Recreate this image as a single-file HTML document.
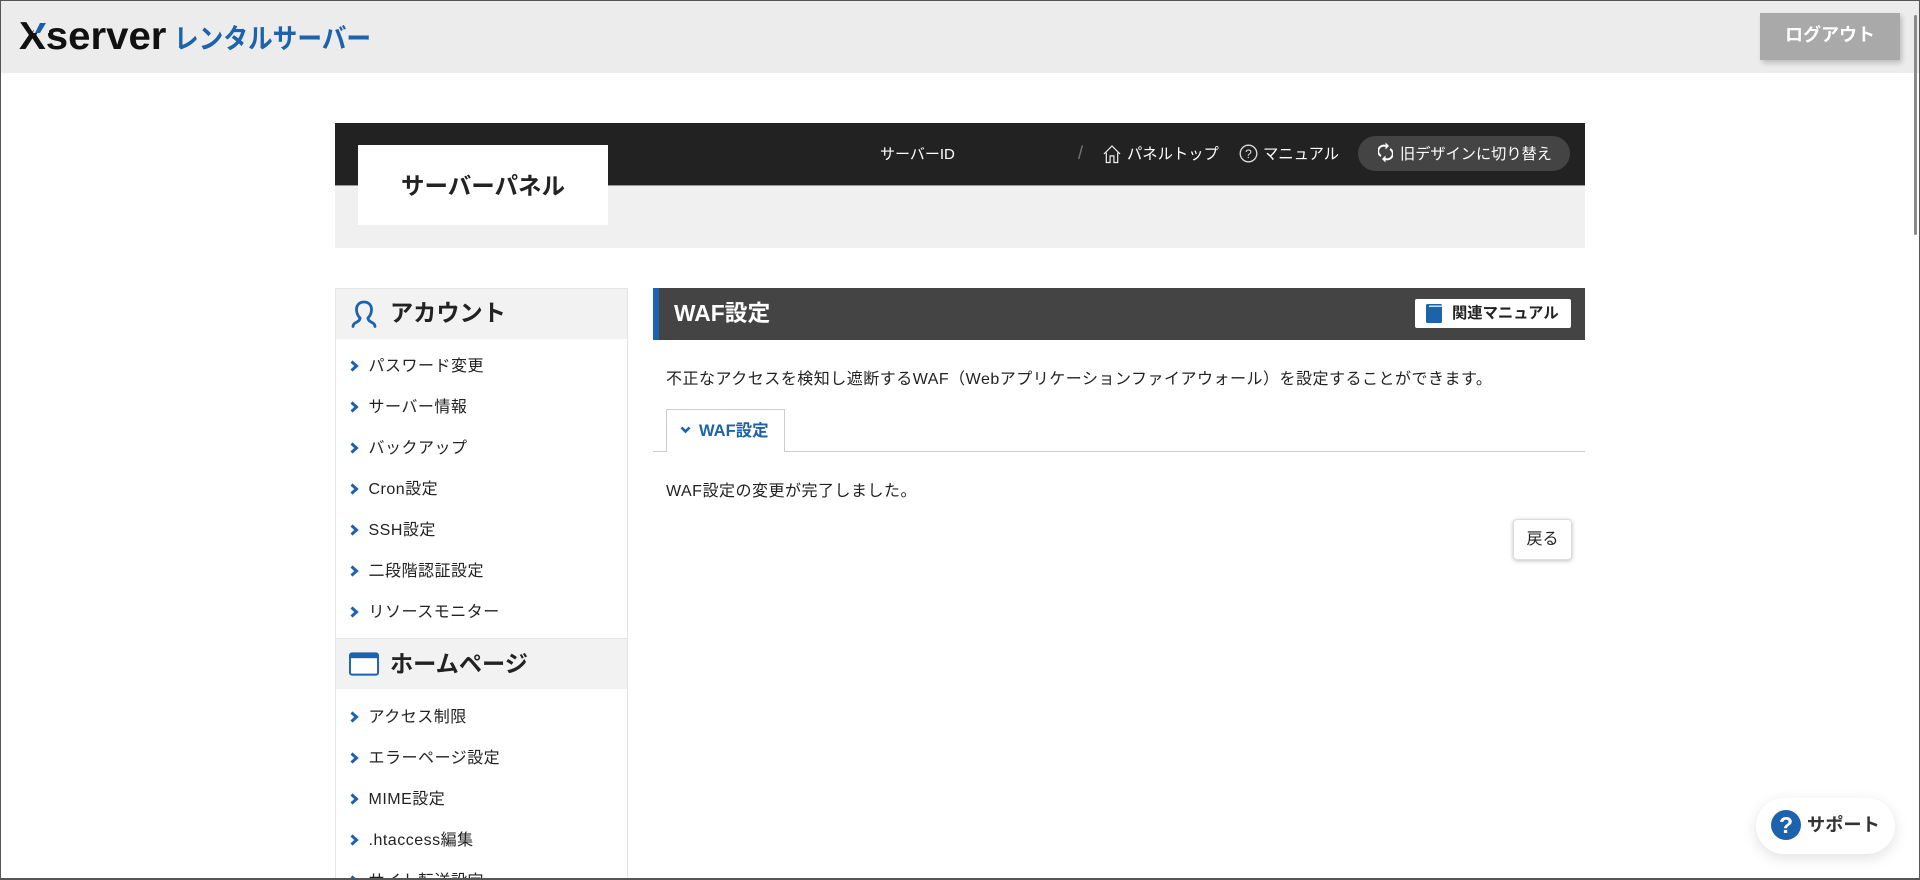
<!DOCTYPE html>
<html lang="ja">
<head>
<meta charset="utf-8">
<title>WAF設定</title>
<style>
*{box-sizing:border-box;margin:0;padding:0}
html,body{width:1920px;height:880px;overflow:hidden;background:#fff}
body{position:relative;font-family:"Liberation Sans","Noto Sans CJK JP",sans-serif;color:#222;font-size:16px;text-spacing-trim:space-all}
.a{position:absolute;white-space:nowrap}
.t{line-height:24px;height:24px}
.item{position:absolute;left:368.5px;line-height:24px;height:24px;font-size:16px;letter-spacing:.5px;color:#222;white-space:nowrap}
.arr{position:absolute;left:350px;width:9px;height:12px}
</style>
</head>
<body>
<div class="a" style="left:0;top:0;width:1920px;height:73px;background:#ececec"></div>

<!-- logo -->
<div class="a" style="left:19px;top:13px;font-size:39px;line-height:48px;font-weight:700;color:#111;transform-origin:0 0;transform:scale(1.03,1)">Xserver</div>
<svg class="a" style="left:32px;top:20px" width="17" height="14"><polygon points="4,0 17,0 17,13 1,13" fill="#ececec"/><polygon points="8,3 14,3 8,13 3,13" fill="#1a5fa8"/></svg>
<div class="a" style="left:174px;top:21px;font-size:27.5px;line-height:36px;font-weight:700;color:#1d62ad;transform-origin:0 0;transform:scale(.897,1)">レンタルサーバー</div>

<!-- logout -->
<div class="a" style="left:1760px;top:13px;width:140px;height:47px;background:#a9a9a9;box-shadow:2px 3px 5px rgba(0,0,0,.2);color:#fff;font-weight:700;font-size:18px;line-height:44px;text-align:center">ログアウト</div>

<!-- scrollbar -->
<div class="a" style="left:1914px;top:15px;width:3px;height:220px;background:#8a8a8a;border-radius:2px"></div>

<!-- panel header -->
<div class="a" style="left:335px;top:123px;width:1250px;height:62px;background:#222"></div>
<div class="a" style="left:335px;top:185px;width:1250px;height:63px;background:#f0f0f0;border-top:1px solid #999"></div>
<div class="a" style="left:358px;top:145px;width:250px;height:80px;background:#fff;color:#222;font-weight:700;font-size:23.5px;line-height:83px;text-align:center">サーバーパネル</div>

<div class="a t" style="left:880px;top:143px;color:#fff;font-size:15px">サーバーID</div>
<div class="a t" style="left:1078px;top:141px;color:#777;font-size:18px">/</div>
<svg class="a" style="left:1103px;top:144px" width="18" height="20" viewBox="0 0 19 20" fill="none" stroke="#eee" stroke-width="1.3"><path d="M1 10 9.5 1.5 18 10M3.5 8.5V19H7.5V12H11.500V19H15.500V8.500"/></svg>
<div class="a t" style="left:1127px;top:143px;color:#fff;font-size:15.3px">パネルトップ</div>
<svg class="a" style="left:1239px;top:144px" width="19" height="19" viewBox="0 0 19 19" fill="none"><circle cx="9.5" cy="9.5" r="8.3" stroke="#ddd" stroke-width="1.3"/><text x="9.5" y="14" text-anchor="middle" fill="#ddd" font-size="12" font-family="Liberation Sans,sans-serif">?</text></svg>
<div class="a t" style="left:1263px;top:143px;color:#fff;font-size:15.3px">マニュアル</div>
<div class="a" style="left:1358px;top:136px;width:212px;height:35px;background:#444;border-radius:18px"></div>
<svg class="a" style="left:1378px;top:142px" width="15" height="21" viewBox="0 0 15 21" fill="none" stroke="#fff" stroke-width="2"><path d="M3 14A5.500 5.500 0 0 1 7.500 4"/><path d="M12 7A5.500 5.500 0 0 1 7.500 17"/><path d="M7.500 0.500 11 4 7.500 7.500Z" fill="#fff" stroke="none"/><path d="M7.500 13.500 4 17 7.500 20.500Z" fill="#fff" stroke="none"/></svg>
<div class="a t" style="left:1400px;top:143px;color:#fff;font-size:15.2px">旧デザインに切り替え</div>

<!-- sidebar -->
<div class="a" style="left:335px;top:288px;width:293px;height:600px;border:1px solid #e4e4e4;border-bottom:0"></div>
<div class="a" style="left:336px;top:289px;width:291px;height:50px;background:#f2f2f2"></div>
<svg class="a" style="left:351px;top:300px" width="26" height="28" viewBox="0 0 26 28" fill="none" stroke="#1d62ad" stroke-width="2.8" stroke-linecap="round"><path d="M9 18C6 15 5.500 12 5.500 9.500 5.500 4.500 9 2 13 2S20.500 4.500 20.500 9.500C20.500 12 20 15 17 18"/><path d="M9 18C9 21 6 22 4 23 2.500 24 2 25 2 26.500"/><path d="M17 18C17 21 20 22 22 23 23.500 24 24 25 24 26.500"/></svg>
<div class="a" style="left:390px;top:295px;font-size:23.2px;line-height:36px;font-weight:700;color:#222">アカウント</div>

<div class="a" style="left:336px;top:638px;width:291px;height:51px;background:#f2f2f2;border-top:1px solid #e4e4e4"></div>
<svg class="a" style="left:349px;top:652px" width="30" height="24" viewBox="0 0 31 24"><rect x="1" y="1" width="29" height="22" rx="2" fill="#fff" stroke="#1d62ad" stroke-width="2"/><rect x="1" y="1" width="29" height="5" fill="#1d62ad"/></svg>
<div class="a" style="left:390px;top:646px;font-size:23.2px;line-height:36px;font-weight:700;color:#222">ホームページ</div>

<svg width="0" height="0" style="position:absolute"><defs><symbol id="c" viewBox="0 0 9 12"><path d="M1.500 1.500 6.500 6 1.500 10.500" fill="none" stroke="#1d62ad" stroke-width="3"/></symbol></defs></svg>

<svg class="arr" style="top:360px"><use href="#c"/></svg><div class="item" style="top:355px">パスワード変更</div>
<svg class="arr" style="top:401px"><use href="#c"/></svg><div class="item" style="top:396px">サーバー情報</div>
<svg class="arr" style="top:442px"><use href="#c"/></svg><div class="item" style="top:437px">バックアップ</div>
<svg class="arr" style="top:483px"><use href="#c"/></svg><div class="item" style="top:478px">Cron設定</div>
<svg class="arr" style="top:524px"><use href="#c"/></svg><div class="item" style="top:519px">SSH設定</div>
<svg class="arr" style="top:565px"><use href="#c"/></svg><div class="item" style="top:560px">二段階認証設定</div>
<svg class="arr" style="top:606px"><use href="#c"/></svg><div class="item" style="top:601px">リソースモニター</div>
<svg class="arr" style="top:711px"><use href="#c"/></svg><div class="item" style="top:706px">アクセス制限</div>
<svg class="arr" style="top:752px"><use href="#c"/></svg><div class="item" style="top:747px">エラーページ設定</div>
<svg class="arr" style="top:793px"><use href="#c"/></svg><div class="item" style="top:788px">MIME設定</div>
<svg class="arr" style="top:834px"><use href="#c"/></svg><div class="item" style="top:829px">.htaccess編集</div>
<svg class="arr" style="top:875px"><use href="#c"/></svg><div class="item" style="top:870px">サイト転送設定</div>

<!-- main -->
<div class="a" style="left:653px;top:288px;width:932px;height:52px;background:#444;border-left:6px solid #1d62ad"></div>
<div class="a" style="left:674px;top:295px;font-size:22.8px;line-height:36px;font-weight:700;color:#fff">WAF設定</div>
<div class="a" style="left:1415px;top:299px;width:156px;height:29px;background:#fff;border-radius:2px"></div>
<svg class="a" style="left:1426px;top:304px" width="16" height="19" viewBox="0 0 16 19"><rect x="0" y="0" width="16" height="19" rx="1.500" fill="#1d62ad"/><rect x="3" y="1.500" width="13" height="1.500" fill="#cfe0f2"/></svg>
<div class="a t" style="left:1452px;top:302px;font-size:15.3px;font-weight:700;color:#222">関連マニュアル</div>

<div class="a t" style="left:666px;top:368px;font-size:16px;letter-spacing:.5px;color:#222">不正なアクセスを検知し遮断するWAF（Webアプリケーションファイアウォール）を設定することができます。</div>

<div class="a" style="left:653px;top:451px;width:932px;height:1px;background:#ccc"></div>
<div class="a" style="left:666px;top:409px;width:119px;height:43px;background:#fff;border:1px solid #ccc;border-bottom:0"></div>
<svg class="a" style="left:680px;top:426px" width="11" height="8" viewBox="0 0 11 8"><path d="M1.500 1.500 5.500 5.500 9.500 1.500" fill="none" stroke="#1d62ad" stroke-width="2.600"/></svg>
<div class="a t" style="left:699px;top:419px;font-size:16.500px;font-weight:700;color:#1d62ad">WAF設定</div>

<div class="a t" style="left:666px;top:480px;font-size:16px;letter-spacing:.5px;color:#222">WAF設定の変更が完了しました。</div>

<div class="a" style="left:1513px;top:519px;width:59px;height:41px;background:#fff;border:1px solid #ddd;border-radius:4px;box-shadow:0 1px 4px rgba(0,0,0,.25);font-size:16px;line-height:40px;text-align:center;color:#222">戻る</div>

<!-- support -->
<div class="a" style="left:1756px;top:798px;width:139px;height:56px;background:#fff;border-radius:28px;box-shadow:0 4px 14px rgba(0,0,0,.12)"></div>
<svg class="a" style="left:1771px;top:810px" width="30" height="30" viewBox="0 0 30 30"><circle cx="15" cy="15" r="15" fill="#1d62ad"/><text x="15" y="23" text-anchor="middle" fill="#fff" font-size="23" font-weight="700" font-family="Liberation Sans,sans-serif">?</text></svg>
<div class="a" style="left:1807px;top:811px;font-size:18.200px;line-height:28px;font-weight:700;color:#333">サポート</div>

<!-- window frame -->
<div class="a" style="left:0;top:0;width:1920px;height:880px;border:1px solid #555;border-bottom:2px solid #555;pointer-events:none"></div>
</body>
</html>
